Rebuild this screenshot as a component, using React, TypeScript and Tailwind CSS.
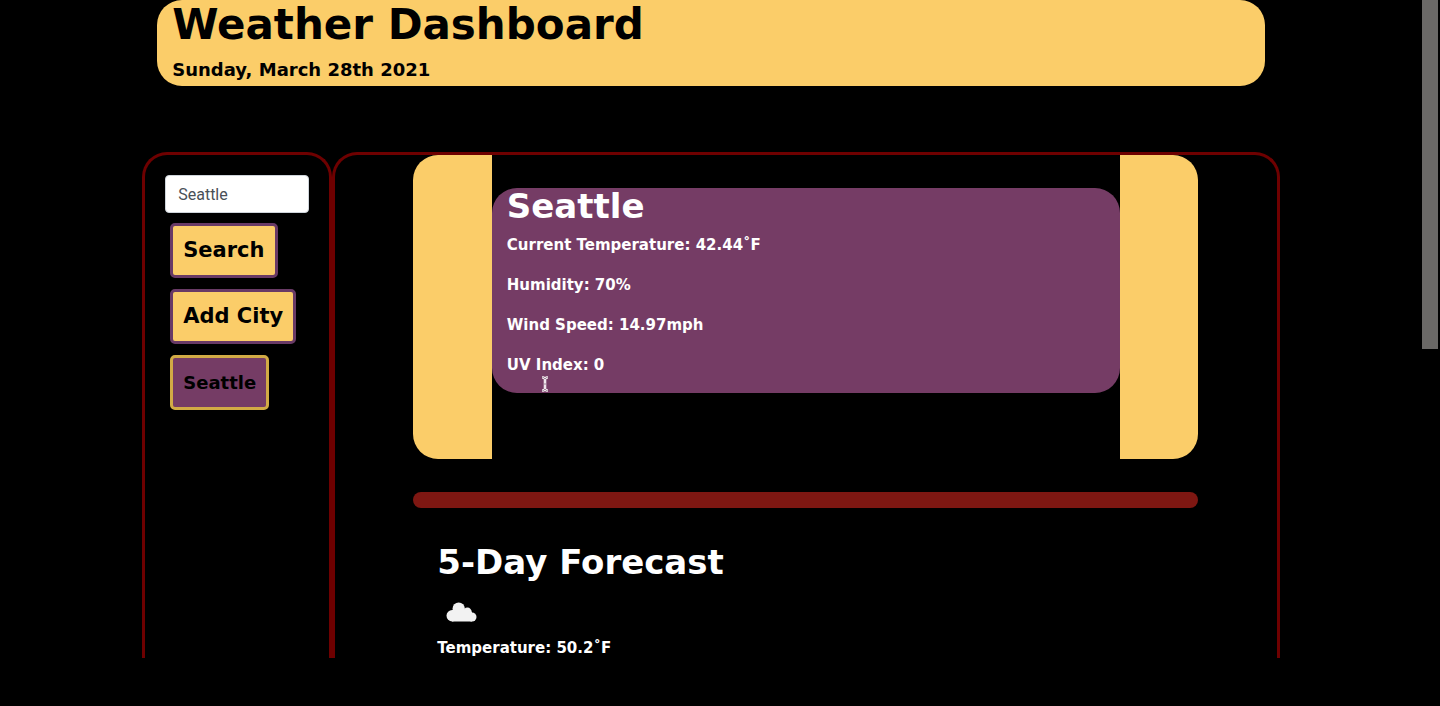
import { useState } from "react";

const readings = [
  "Current Temperature: 42.44˚F",
  "Humidity: 70%",
  "Wind Speed: 14.97mph",
  "UV Index: 0",
];

const actionButton =
  "rounded-[5px] border-[3px] border-[#693a66] bg-[#fbcd69] px-2.5 text-[21px] leading-[49px] font-bold whitespace-nowrap";

function CloudIcon() {
  return (
    <svg
      viewBox="0 0 31 20"
      className="h-5 w-[31px]"
      role="img"
      aria-label="Cloudy"
      fill="#f2f2f2"
    >
      <circle cx="6.2" cy="13.8" r="5.7" />
      <circle cx="12.7" cy="6.7" r="6.2" />
      <circle cx="21.4" cy="10" r="4.4" />
      <circle cx="26" cy="15" r="4.5" />
      <path d="M6 8H21V10H26V19.500H6Z" />
    </svg>
  );
}

function TextCursor() {
  return (
    <svg
      viewBox="0 0 8 16"
      className="absolute bottom-[1px] left-[49px] h-4 w-2"
      fill="none"
      aria-hidden="true"
    >
      <path
        d="M1 1.500H2.500L4 3L5.500 1.500H7M4 3V13M1 14.500H2.500L4 13L5.500 14.500H7"
        stroke="#efe6ec"
        strokeWidth="2.600"
      />
      <path
        d="M1.500 1.500H2.500L4 3L5.500 1.500H6.500M1.500 14.500H2.500L4 13L5.500 14.500H6.500M3 8H5"
        stroke="#8a7085"
        strokeWidth="0.800"
      />
    </svg>
  );
}

function Header() {
  return (
    <header className="px-[15px]">
      <div className="rounded-[25px] bg-[#fbcd69] px-[15px] text-black">
        <h1 className="text-[42px] leading-[50px] font-bold">
          Weather Dashboard
        </h1>
        <p className="pt-1.5 pb-0.5 text-lg leading-7 font-bold">
          Sunday, March 28th 2021
        </p>
      </div>
    </header>
  );
}

function Sidebar() {
  const [city, setCity] = useState("Seattle");
  return (
    <aside className="w-1/6 rounded-t-[25px] border-[3px] border-b-0 border-[#6e0000] px-5 pt-5">
      <input
        type="text"
        aria-label="City"
        value={city}
        onChange={(event) => setCity(event.target.value)}
        className="h-[38px] w-full rounded-[4px] border border-[#ced4da] bg-white px-3 font-['Roboto',sans-serif] text-base text-[#495057]"
      />
      <div className="flex flex-col items-start gap-[11px] pt-2.5 pl-[5px]">
        <button type="button" className={actionButton}>
          Search
        </button>
        <button type="button" className={actionButton}>
          Add City
        </button>
        <button
          type="button"
          className="rounded-[5px] border-[3px] border-[#d2ab45] bg-[#753c65] px-2.5 text-lg leading-[49px] font-bold"
        >
          Seattle
        </button>
      </div>
    </aside>
  );
}

function CurrentWeather() {
  return (
    <section className="flex">
      <div className="w-1/10 rounded-l-[25px] bg-[#fbcd69]" />
      <div className="flex-1 pt-[33px] pb-[66px]">
        <div className="relative rounded-[25px] bg-[#753c65] px-[15px] pb-2">
          <h2 className="text-[34px] leading-[37px] font-bold">Seattle</h2>
          {readings.map((reading) => (
            <p key={reading} className="text-[15px] leading-10 font-bold">
              {reading}
            </p>
          ))}
          <TextCursor />
        </div>
      </div>
      <div className="w-1/10 rounded-r-[25px] bg-[#fbcd69]" />
    </section>
  );
}

function Forecast() {
  return (
    <section className="px-6 pt-[34px]">
      <h2 className="text-[34px] leading-10 font-bold">5-Day Forecast</h2>
      <div className="px-[9px] pt-5 pb-1.5">
        <CloudIcon />
      </div>
      <p className="text-[15px] leading-10 font-bold">Temperature: 50.2˚F</p>
    </section>
  );
}

export default function App() {
  return (
    <div className="h-screen overflow-hidden bg-black pb-12 font-['DejaVu_Sans',sans-serif] text-black">
      <div className="flex h-full overflow-hidden">
        <div className="flex min-w-0 flex-1 flex-col items-center">
          <div className="flex min-h-0 w-4/5 flex-1 flex-col gap-[66px]">
            <Header />
            <div className="flex min-h-0 flex-1">
              <Sidebar />
              <main className="flex-1 overflow-hidden rounded-t-[25px] border-[3px] border-b-0 border-[#6e0000] text-white">
                <div className="mx-auto w-5/6">
                  <CurrentWeather />
                  <div className="mt-[33px] h-4 rounded-full bg-[#7e1712]" />
                  <Forecast />
                </div>
              </main>
            </div>
          </div>
        </div>
        <div className="w-[18px] pr-0.5" aria-hidden="true">
          <div className="h-[53%] bg-[#6a6866]" />
        </div>
      </div>
    </div>
  );
}
